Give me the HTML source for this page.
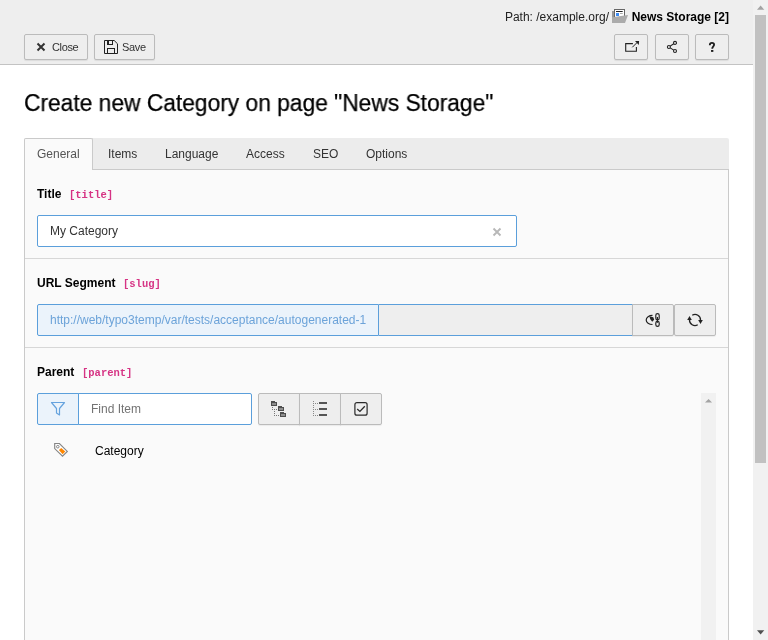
<!DOCTYPE html>
<html><head><meta charset="utf-8">
<style>
*{box-sizing:border-box;margin:0;padding:0}
html,body{width:768px;height:640px;overflow:hidden;background:#fff;font-family:"Liberation Sans",sans-serif;font-size:12px;color:#333}
.abs{position:absolute}
#hdr{position:absolute;left:0;top:0;width:753px;height:65px;background:#eeeeee;border-bottom:1px solid #c3c3c3}
.btn{position:absolute;height:26px;border:1px solid #bbb;border-radius:2px;background:#eee;box-shadow:0 1px 1px rgba(0,0,0,.08)}
.btxt{position:absolute;font-size:11px;color:#333;line-height:13px;white-space:nowrap;letter-spacing:-0.35px}
#sb{position:absolute;left:753px;top:0;width:15px;height:640px;background:#f1f1f1}
#h1{position:absolute;left:24px;top:86.5px;font-size:23.5px;color:#000;-webkit-text-stroke:0.25px #000;white-space:nowrap;line-height:32px;transform:scaleX(0.969);transform-origin:0 0}
#nav{position:absolute;left:24px;top:138px;width:705px;height:32px;background:#ececec;border-bottom:1px solid #cacaca;border-radius:2px 2px 0 0}
#content{position:absolute;left:24px;top:170px;width:705px;height:480px;background:#fafafa;border-left:1px solid #cacaca;border-right:1px solid #cacaca}
.tab{position:absolute;top:139px;height:31px;line-height:30px;font-size:12px;color:#333;white-space:nowrap}
.sep{position:absolute;left:25px;width:703px;height:1px;background:#d7d7d7}
.lbl{position:absolute;font-weight:bold;font-size:12px;color:#000;line-height:14px;white-space:nowrap}
.code{position:absolute;font-family:"Liberation Mono",monospace;font-size:10.5px;font-weight:bold;color:#d63384;line-height:12px;white-space:nowrap}
.inp{position:absolute;height:32px;border:1px solid #5b9fdb;border-radius:2px;background:#fff}
.itxt{position:absolute;font-size:12px;line-height:14px;white-space:nowrap}
.ibtn{position:absolute;height:32px;border:1px solid #bbb;background:#eee;border-radius:2px;box-shadow:0 1px 1px rgba(0,0,0,.06)}
</style></head><body><div id="wrap" style="position:absolute;left:0;top:0;width:768px;height:640px;will-change:transform">
<div id="hdr">
  <div class="abs" style="right:24px;top:9px;font-size:12px;line-height:16px;white-space:nowrap;color:#222">Path: /example.org/ <span style="display:inline-block;width:16px"></span> <b style="color:#000">News Storage [2]</b></div>
  <svg class="abs" style="left:612px;top:8px" width="16" height="16" viewBox="0 0 16 16"><rect x="0" y="3" width="3" height="12" fill="#999"/><rect x="2.5" y="1.5" width="10" height="10" fill="#fff" stroke="#666"/><rect x="4" y="3" width="6.7" height="1" fill="#222"/><rect x="4" y="5" width="3" height="3" fill="#3c8cf5"/><rect x="8" y="5" width="2.7" height="1" fill="#aaa"/><path d="M0 9.2L16 7L13 15H0z" fill="#ababab"/></svg>
  <div class="btn" style="left:24px;top:34px;width:64px"></div>
  <div class="btn" style="left:94px;top:34px;width:61px"></div>
  <div class="btn" style="left:614px;top:34px;width:34px"></div>
  <div class="btn" style="left:655px;top:34px;width:34px"></div>
  <div class="btn" style="left:695px;top:34px;width:34px"></div>
  <svg class="abs" style="left:36px;top:42px" width="10" height="10" viewBox="0 0 10 10"><path d="M1.5 1.5l7 7M8.5 1.5l-7 7" stroke="#333" stroke-width="2"/></svg>
  <div class="btxt" style="left:52px;top:41px">Close</div>
  <svg class="abs" style="left:104px;top:40px" width="14" height="14" viewBox="0 0 14 14"><path d="M0.5 0.5H10.2L13.5 3.8V13.5H0.5Z" fill="none" stroke="#222"/><rect x="3.5" y="0.5" width="5" height="4" fill="none" stroke="#222"/><rect x="3" y="1" width="2" height="3" fill="#222"/><rect x="3.5" y="8.5" width="7" height="5" fill="none" stroke="#222"/></svg>
  <div class="btxt" style="left:122px;top:41px">Save</div>
  <svg class="abs" style="left:620px;top:38px" width="20" height="16" viewBox="0 0 20 16"><path d="M12.9 5.6H5.7V13.3H16.4V9" fill="none" stroke="#222" stroke-width="1.1"/><path d="M12.3 9.3L17.3 4.3" stroke="#222" stroke-width="1"/><path d="M15 3.1L19.1 2.9L18.8 7.1Z" fill="#222"/></svg>
  <svg class="abs" style="left:665px;top:40px" width="14" height="14" viewBox="0 0 14 14"><circle cx="10" cy="2.9" r="1.5" fill="none" stroke="#222" stroke-width="1.1"/><circle cx="3.9" cy="7" r="1.5" fill="none" stroke="#222" stroke-width="1.1"/><circle cx="10" cy="11" r="1.5" fill="none" stroke="#222" stroke-width="1.1"/><path d="M5.2 6.1L8.7 3.8M5.2 7.9L8.7 10.1" stroke="#222" stroke-width="1.1"/></svg>
  <svg class="abs" style="left:704px;top:38px" width="16" height="16" viewBox="0 0 16 16"><path d="M5.8 7.2C5.8 5.6 6.8 4.9 8 4.9C9.2 4.9 10.1 5.6 10.1 6.8C10.1 8.3 8.2 8.4 8.2 10.8" fill="none" stroke="#1e1e1e" stroke-width="1.8"/><rect x="7.05" y="12" width="2.3" height="1.9" fill="#1e1e1e"/></svg>
</div>
<div id="sb">
  <svg class="abs" style="left:0;top:0" width="15" height="15"><path d="M4 9.8h7.3l-3.65-4.2z" fill="#a3a3a3"/></svg>
  <div class="abs" style="left:2px;top:15px;width:11px;height:448px;background:#c1c1c1"></div>
  <svg class="abs" style="left:0;top:625px" width="15" height="15"><path d="M4 5.2h7.3l-3.65 4.2z" fill="#505050"/></svg>
</div>
<div id="h1">Create new Category on page "News Storage"</div>
<div id="nav"></div>
<div class="abs" style="left:24px;top:138px;width:69px;height:32px;background:#fafafa;border:1px solid #cacaca;border-bottom:0;border-radius:2px 2px 0 0"></div>
<div id="content"></div>
<div class="tab" style="left:37px;color:#555">General</div>
<div class="tab" style="left:108px">Items</div>
<div class="tab" style="left:165px">Language</div>
<div class="tab" style="left:246px">Access</div>
<div class="tab" style="left:313px">SEO</div>
<div class="tab" style="left:366px">Options</div>

<!-- Title -->
<div class="lbl" style="left:37px;top:187px">Title</div>
<div class="code" style="left:69px;top:189px">[title]</div>
<div class="inp" style="left:37px;top:215px;width:480px"></div>
<div class="itxt" style="left:50px;top:224px;color:#333">My Category</div>
<svg class="abs" style="left:492px;top:227px" width="10" height="10" viewBox="0 0 10 10"><path d="M1.5 1.5l7 7M8.5 1.5l-7 7" stroke="#b8b8b8" stroke-width="1.9"/></svg>
<div class="sep" style="top:258px"></div>

<!-- URL -->
<div class="lbl" style="left:37px;top:276px">URL Segment</div>
<div class="code" style="left:123px;top:278px">[slug]</div>
<div class="inp" style="left:37px;top:304px;width:342px;background:#ebf3fb;border-radius:2px 0 0 2px"></div>
<div class="itxt" style="left:50px;top:313px;color:#6ca3d9">http://web/typo3temp/var/tests/acceptance/autogenerated-1</div>
<div class="abs" style="left:379px;top:304px;width:254px;height:32px;background:#eee;border:1px solid #5b9fdb;border-left:0;border-right:0"></div>
<div class="ibtn" style="left:632px;top:304px;width:42px;border-radius:0 2px 2px 0"></div>
<div class="ibtn" style="left:674px;top:304px;width:42px"></div>
<svg class="abs" style="left:644px;top:310px" width="20" height="20" viewBox="0 0 20 20"><path d="M8.5 5.3A6.3 4.6 0 0 0 8.5 14.5" fill="none" stroke="#222" stroke-width="1.2"/><path d="M5.3 6.3L9.3 7.3L10.2 9.8L8.2 11.8L6.3 9.2Z" fill="#222"/><rect x="11.8" y="3.6" width="3.4" height="6.4" rx="1.7" fill="none" stroke="#222" stroke-width="1.15"/><rect x="11.8" y="11.4" width="3.4" height="5" rx="1.7" fill="none" stroke="#222" stroke-width="1.15"/><path d="M13.4 7V12.8" stroke="#222" stroke-width="1.2"/></svg>
<svg class="abs" style="left:685px;top:310px" width="20" height="20" viewBox="0 0 20 20"><path d="M7.25 5.24A5.5 5.5 0 0 1 15.5 10.3" fill="none" stroke="#222" stroke-width="1.3"/><path d="M13.2 10.1H17.8L15.5 13.9Z" fill="#222"/><path d="M12.75 14.76A5.5 5.5 0 0 1 4.5 9.7" fill="none" stroke="#222" stroke-width="1.3"/><path d="M2.2 9.9H6.8L4.5 6.1Z" fill="#222"/></svg>
<div class="sep" style="top:347px"></div>

<!-- Parent -->
<div class="lbl" style="left:37px;top:365px">Parent</div>
<div class="code" style="left:82px;top:367px">[parent]</div>
<div class="inp" style="left:37px;top:393px;width:42px;background:#ebf3fb;border-radius:2px 0 0 2px"></div>
<div class="inp" style="left:78px;top:393px;width:174px;border-radius:0 2px 2px 0"></div>
<svg class="abs" style="left:48px;top:398px" width="20" height="20" viewBox="0 0 20 20"><path d="M3.5 4.5H16.5L11.5 10.5V17L8.5 15V10.5Z" fill="none" stroke="#66a3de" stroke-width="1.2" stroke-linejoin="round"/></svg>
<div class="itxt" style="left:91px;top:402px;color:#737373">Find Item</div>
<div class="ibtn" style="left:258px;top:393px;width:42px;border-radius:2px 0 0 2px"></div>
<div class="ibtn" style="left:299px;top:393px;width:42px;border-radius:0"></div>
<div class="ibtn" style="left:340px;top:393px;width:42px;border-radius:0 2px 2px 0"></div>
<svg class="abs" style="left:268px;top:398px" width="22" height="22" viewBox="0 0 22 22" shape-rendering="crispEdges"><g fill="#4e4e4e"><path d="M3 3h3l1 1h2v4h-6z"/><path d="M10 8h3l1 1h2v4h-6z"/><path d="M12 14h3l1 1h2v4h-6z"/></g><g fill="#8e8e8e"><rect x="4" y="5" width="4" height="2"/><rect x="11" y="10" width="4" height="2"/><rect x="13" y="16" width="4" height="2"/></g><g fill="#777"><rect x="4" y="9" width="1" height="1"/><rect x="4" y="11" width="1" height="1"/><rect x="6" y="11" width="1" height="1"/><rect x="8" y="11" width="1" height="1"/><rect x="6" y="13" width="1" height="1"/><rect x="6" y="15" width="1" height="1"/><rect x="6" y="17" width="1" height="1"/><rect x="8" y="17" width="1" height="1"/><rect x="10" y="17" width="1" height="1"/></g></svg>
<svg class="abs" style="left:310px;top:398px" width="20" height="20" viewBox="0 0 20 20" shape-rendering="crispEdges"><g fill="#888"><rect x="3" y="3" width="1" height="1"/><rect x="3" y="5" width="1" height="1"/><rect x="3" y="7" width="1" height="1"/><rect x="3" y="9" width="1" height="1"/><rect x="3" y="11" width="1" height="1"/><rect x="3" y="13" width="1" height="1"/><rect x="3" y="15" width="1" height="1"/><rect x="3" y="17" width="1" height="1"/><rect x="5" y="5" width="1" height="1"/><rect x="7" y="5" width="1" height="1"/><rect x="5" y="11" width="1" height="1"/><rect x="7" y="11" width="1" height="1"/><rect x="5" y="17" width="1" height="1"/><rect x="7" y="17" width="1" height="1"/></g><g fill="#555"><rect x="9" y="4" width="8" height="2"/><rect x="9" y="10" width="8" height="2"/><rect x="9" y="16" width="8" height="2"/></g></svg>
<svg class="abs" style="left:350px;top:398px" width="22" height="22" viewBox="0 0 22 22"><rect x="4.9" y="4.7" width="12.2" height="12.5" rx="2" fill="none" stroke="#2a2a2a" stroke-width="1.2"/><path d="M7.2 11.1L9.9 13.4L14.8 8.3" fill="none" stroke="#2a2a2a" stroke-width="1.3"/></svg>
<svg class="abs" style="left:52px;top:440px" width="18" height="18" viewBox="0 0 18 18"><path d="M2.7 3.5H7.4L15.3 11.4L10.5 16.1L2.7 8.6Z" fill="#fff" stroke="#858585" stroke-width="1.15"/><circle cx="5.8" cy="6.7" r="1.3" fill="none" stroke="#858585" stroke-width="1"/><path d="M6.9 10.1L9.2 8L13.3 11.4L10.6 14.2Z" fill="#ff8700"/></svg>
<div class="itxt" style="left:95px;top:444px;color:#000">Category</div>
<div class="abs" style="left:701px;top:393px;width:15px;height:260px;background:#f1f1f1"></div>
<svg class="abs" style="left:701px;top:393px" width="15" height="15"><path d="M4 9.6h7.1l-3.55-3.7z" fill="#a3a3a3"/></svg>
</div></body></html>
